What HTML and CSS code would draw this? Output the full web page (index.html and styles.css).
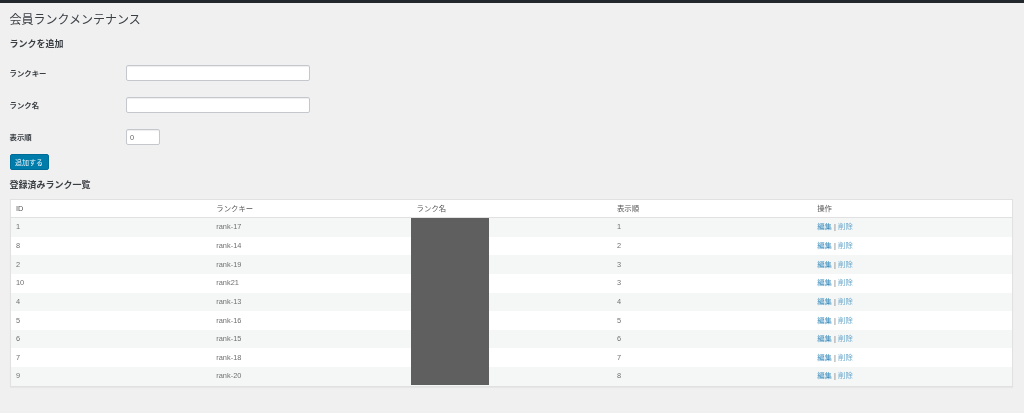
FILE: index.html
```html
<!DOCTYPE html>
<html lang="ja">
<head>
    <meta charset="UTF-8">
    <title>会員ランクメンテナンス</title>
    <link rel="stylesheet" href="styles.css">
</head>
<body>
    <div class="topbar"></div>
    <div class="wrap">
        <h1>会員ランクメンテナンス</h1>
        <h2 class="add-title">ランクを追加</h2>
        <form class="rank-form">
            <label>ランクキー</label>
            <input type="text" class="regular">
            <label>ランク名</label>
            <input type="text" class="regular">
            <label>表示順</label>
            <input type="text" class="small" value="0">
        </form>
        <button class="add-button">追加する</button>
        <h2 class="list-title">登録済みランク一覧</h2>
        <div class="table-box">
            <table>
                <thead>
                    <tr>
                        <th>ID</th>
                        <th>ランクキー</th>
                        <th>ランク名</th>
                        <th>表示順</th>
                        <th>操作</th>
                    </tr>
                </thead>
                <tbody>
                    <tr><td>1</td><td>rank-17</td><td></td><td>1</td><td><a href="#">編集</a> | <a href="#" class="del">削除</a></td></tr>
                    <tr><td>8</td><td>rank-14</td><td></td><td>2</td><td><a href="#">編集</a> | <a href="#" class="del">削除</a></td></tr>
                    <tr><td>2</td><td>rank-19</td><td></td><td>3</td><td><a href="#">編集</a> | <a href="#" class="del">削除</a></td></tr>
                    <tr><td>10</td><td>rank21</td><td></td><td>3</td><td><a href="#">編集</a> | <a href="#" class="del">削除</a></td></tr>
                    <tr><td>4</td><td>rank-13</td><td></td><td>4</td><td><a href="#">編集</a> | <a href="#" class="del">削除</a></td></tr>
                    <tr><td>5</td><td>rank-16</td><td></td><td>5</td><td><a href="#">編集</a> | <a href="#" class="del">削除</a></td></tr>
                    <tr><td>6</td><td>rank-15</td><td></td><td>6</td><td><a href="#">編集</a> | <a href="#" class="del">削除</a></td></tr>
                    <tr><td>7</td><td>rank-18</td><td></td><td>7</td><td><a href="#">編集</a> | <a href="#" class="del">削除</a></td></tr>
                    <tr><td>9</td><td>rank-20</td><td></td><td>8</td><td><a href="#">編集</a> | <a href="#" class="del">削除</a></td></tr>
                </tbody>
            </table>
            <div class="redacted"></div>
        </div>
    </div>
</body>
</html>
```
FILE: styles.css
```css
html, body {
    margin: 0;
    height: 100%;
}
body {
    font-family: "Liberation Sans", "Noto Sans CJK JP", sans-serif;
    font-size: 7.4px;
    color: #444;
    background-color: #f0f0f0;
    overflow: hidden;
}
.topbar {
    height: 3px;
    background-color: #23282d;
}
/* the reference is a scaled down capture, so everything is a little soft */
.wrap {
    padding: 0 11px 0 9.5px;
    filter: blur(0.35px);
}
h1 {
    margin: 0;
    padding-top: 10px;
    font-size: 12px;
    line-height: 15px;
    font-weight: 400;
    color: #3a3f44;
}
h2 {
    margin: 0;
    font-size: 9px;
    line-height: 12px;
    font-weight: 700;
    color: #3a3f44;
}
.add-title {
    margin-top: 10px;
}
.rank-form {
    display: grid;
    grid-template-columns: 116.5px 184px;
    grid-auto-rows: 16px;
    row-gap: 16px;
    align-items: center;
    margin-top: 15px;
}
.rank-form label {
    padding-bottom: 2px;
    font-weight: 700;
    color: #3a3f44;
}
.rank-form input {
    box-sizing: border-box;
    height: 16px;
    margin: 0;
    padding: 0 3px;
    font-family: inherit;
    font-size: 7.4px;
    color: #666;
    background-color: #fff;
    border: 1px solid #c4c8cc;
    border-radius: 2px;
    box-shadow: inset 0 1px 1px rgba(0,0,0,0.07);
}
.rank-form input.regular {
    width: 184px;
}
.rank-form input.small {
    width: 34px;
}
.add-button {
    display: block;
    box-sizing: border-box;
    width: 39px;
    height: 16px;
    margin: 9px 0 0 0;
    padding: 0;
    font-family: inherit;
    font-size: 7px;
    color: #e8f2f7;
    background-color: #007cab;
    border: 1px solid #006d99;
    border-radius: 2px;
}
.list-title {
    margin-top: 9px;
}
.table-box {
    position: relative;
    margin-top: 8px;
    background-color: #fff;
    border: 1px solid #e1e1e1;
    box-shadow: 0 1px 1px rgba(0,0,0,0.04);
}
table {
    width: 100%;
    table-layout: fixed;
    border-collapse: collapse;
}
th, td {
    padding: 0 5px 0 5.5px;
    text-align: left;
    font-weight: 400;
    line-height: 10px;
}
th {
    height: 17px;
    color: #555;
    border-bottom: 1px solid #e1e1e1;
}
td {
    height: 18.65px;
    color: #707070;
}
tbody tr:nth-child(odd) {
    background-color: #f5f7f7;
}
a {
    color: #3c8dbc;
    text-decoration: none;
}
a.del {
    color: #6aa8cc;
}
.redacted {
    position: absolute;
    top: 18px;
    bottom: 1px;
    left: 400px;
    width: 78px;
    background-color: #5f5f5f;
}
```
